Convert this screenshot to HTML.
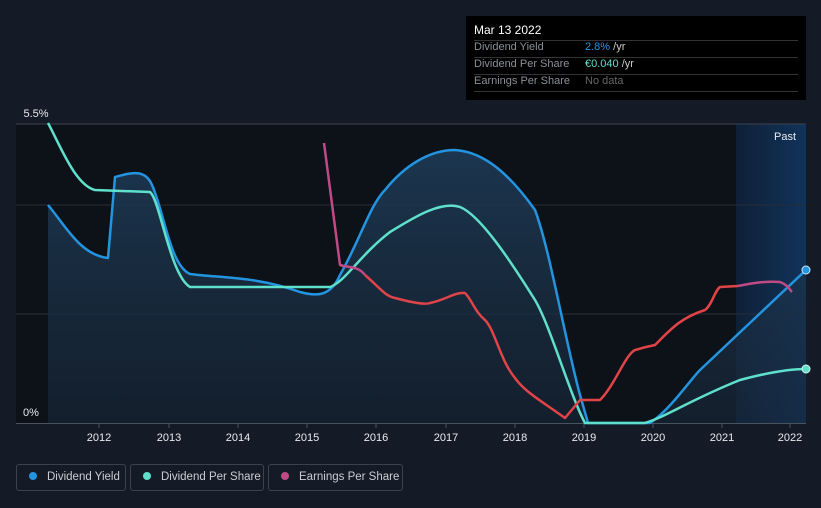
<!DOCTYPE html>
<html><head><meta charset="utf-8"><style>
html,body{margin:0;padding:0;background:#151b26;width:821px;height:508px;overflow:hidden;font-family:"Liberation Sans",sans-serif;}
.tt{position:absolute;left:466px;top:16px;width:340px;height:84px;background:#000;}
.tt div{position:absolute;left:8px;font-size:11px;white-space:nowrap;}
.leg{position:absolute;top:464px;height:27px;border:1px solid #3a4250;border-radius:3px;color:#c8ccd2;font-size:11.5px;line-height:25px;box-sizing:border-box;white-space:nowrap;overflow:hidden;}
.leg span{display:inline-block;width:8px;height:8px;border-radius:50%;margin:0 10px 0 12px;vertical-align:0}
</style></head><body>
<svg width="821" height="508" style="position:absolute;left:0;top:0">
<defs>
<linearGradient id="a" x1="0" y1="0" x2="0" y2="1"><stop offset="0" stop-color="#1d3a55" stop-opacity=".9"/><stop offset="1" stop-color="#18283a" stop-opacity=".6"/></linearGradient>
<linearGradient id="p" x1="0" y1="0" x2="1" y2="0"><stop offset="0" stop-color="#0f2036"/><stop offset="1" stop-color="#11335a"/></linearGradient>
</defs>
<rect x="16" y="124" width="790" height="299" fill="#0d1118"/>
<rect x="736" y="124" width="70" height="299" fill="url(#p)"/>
<line x1="16" y1="124" x2="806" y2="124" stroke="#3a4250"/>
<line x1="16" y1="205" x2="806" y2="205" stroke="#262d38"/>
<line x1="16" y1="314" x2="806" y2="314" stroke="#262d38"/>
<line x1="16" y1="423.5" x2="806" y2="423.5" stroke="#4a525e"/>
<path d="M48,205 C65,225 80,255 108,258 L115,177 C130,173 145,168 152,185 C165,215 170,265 190,274 C220,278 255,276 300,292 C315,296 330,298 340,275 C360,240 370,205 385,190 C405,165 430,150 455,150 C485,152 510,175 535,210 C550,250 565,340 580,395 L588,423 L650,423 C670,410 690,380 700,370 L806,270 L806,423 L48,423Z" fill="url(#a)"/>
<g fill="none" stroke-width="2.5" stroke-linejoin="round">
<path d="M48,205 C65,225 80,255 108,258 L115,177 C130,173 145,168 152,185 C165,215 170,265 190,274 C220,278 255,276 300,292 C315,296 330,298 340,275 C360,240 370,205 385,190 C405,165 430,150 455,150 C485,152 510,175 535,210 C550,250 565,340 580,395 L588,423 L650,423 C670,410 690,380 700,370 L806,270" stroke="#2394e0"/>
<path d="M48,123 C60,145 75,185 95,190 L150,192 C160,200 170,275 190,287 L330,287 C345,282 360,255 390,232 C410,220 440,200 460,207 C480,215 510,260 535,300 C550,325 570,395 585,423 L645,423 C670,415 690,400 740,380 C770,372 790,369 806,369" stroke="#5fe0cc"/>
<path d="M324,143 L340,265 C350,268 358,266 365,275" stroke="#c04a86"/>
<path d="M365,275 C380,288 385,296 395,298 C410,302 425,305 430,303 C445,300 455,292 465,293 C472,300 475,312 485,320 C495,330 500,360 515,378 C525,392 540,400 565,418 L580,400 L600,400 C615,385 625,355 635,350 C645,347 650,346 655,345 C670,330 680,318 705,310 C712,305 715,290 720,287 L738,286" stroke="#e04448"/>
<path d="M738,286 C750,284 760,281 780,282 C788,285 790,290 792,292" stroke="#c04a86"/>
</g>
<circle cx="806" cy="270" r="4" fill="#2394e0" stroke="#cfe6f7"/>
<circle cx="806" cy="369" r="4" fill="#5fe0cc" stroke="#d5f5ef"/>
<g stroke="#4a525e"><line x1="99" y1="424" x2="99" y2="428"/><line x1="169" y1="424" x2="169" y2="428"/><line x1="238" y1="424" x2="238" y2="428"/><line x1="307" y1="424" x2="307" y2="428"/><line x1="376" y1="424" x2="376" y2="428"/><line x1="446" y1="424" x2="446" y2="428"/><line x1="515" y1="424" x2="515" y2="428"/><line x1="584" y1="424" x2="584" y2="428"/><line x1="653" y1="424" x2="653" y2="428"/><line x1="722" y1="424" x2="722" y2="428"/><line x1="790" y1="424" x2="790" y2="428"/></g>
<g fill="#e8eaee" font-size="11" text-anchor="middle" font-family="Liberation Sans,sans-serif">
<text x="99" y="441">2012</text><text x="169" y="441">2013</text><text x="238" y="441">2014</text><text x="307" y="441">2015</text><text x="376" y="441">2016</text><text x="446" y="441">2017</text><text x="515" y="441">2018</text><text x="584" y="441">2019</text><text x="653" y="441">2020</text><text x="722" y="441">2021</text><text x="790" y="441">2022</text>
<text x="36" y="117">5.5%</text><text x="31" y="416">0%</text>
<text x="785" y="140" text-anchor="middle">Past</text>
</g>
</svg>
<div class="tt">
<div style="top:7px;color:#fff;font-size:12px">Mar 13 2022</div>
<div style="top:24px;left:8px;width:324px;border-top:1px solid #333;"></div>
<div style="top:25px;color:#8a8f96">Dividend Yield</div><div style="top:25px;left:119px;color:#ccc"><span style="color:#2394e0">2.8%</span> /yr</div>
<div style="top:41px;left:8px;width:324px;border-top:1px solid #333;"></div>
<div style="top:42px;color:#8a8f96">Dividend Per Share</div><div style="top:42px;left:119px;color:#ccc"><span style="color:#5fe0cc">€0.040</span> /yr</div>
<div style="top:58px;left:8px;width:324px;border-top:1px solid #333;"></div>
<div style="top:59px;color:#8a8f96">Earnings Per Share</div><div style="top:59px;left:119px;color:#666">No data</div>
<div style="top:75px;left:8px;width:324px;border-top:1px solid #333;"></div>
</div>
<div class="leg" style="left:16px;width:110px"><span style="background:#2394e0"></span>Dividend Yield</div>
<div class="leg" style="left:130px;width:134px"><span style="background:#5fe0cc"></span>Dividend Per Share</div>
<div class="leg" style="left:268px;width:135px"><span style="background:#c04a86"></span>Earnings Per Share</div>
</body></html>
